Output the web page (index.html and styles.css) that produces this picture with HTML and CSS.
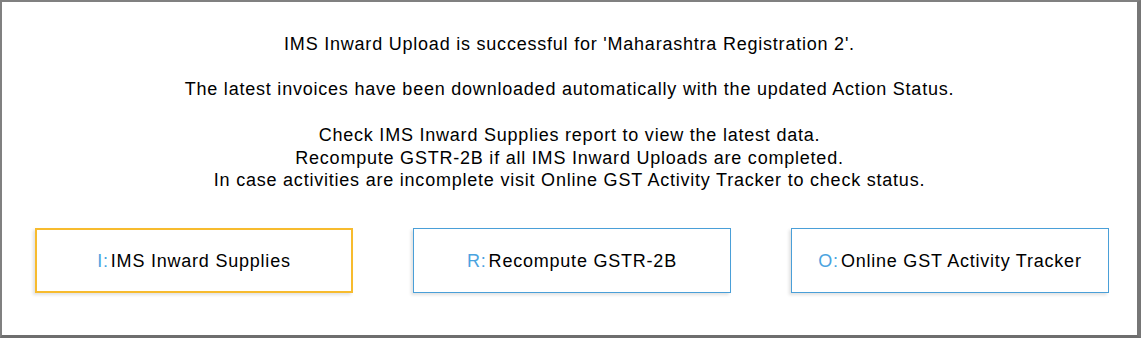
FILE: index.html
```html
<!DOCTYPE html>
<html lang="en">
<head>
    <meta charset="UTF-8">
    <title>IMS Inward Upload</title>
    <link rel="stylesheet" href="styles.css">
</head>
<body>
    <div class="dialog">
        <!-- Message -->
        <div class="message">
            <p class="line-first">IMS Inward Upload is successful for 'Maharashtra Registration 2'.</p>
            <p class="line-second">The latest invoices have been downloaded automatically with the updated Action Status.</p>
            <p class="line-block">
                Check IMS Inward Supplies report to view the latest data.<br>
                Recompute GSTR-2B if all IMS Inward Uploads are completed.<br>
                In case activities are incomplete visit Online GST Activity Tracker to check status.
            </p>
        </div>

        <!-- Actions -->
        <div class="actions">
            <button class="action-button active"><span class="key">I:</span>IMS Inward Supplies</button>
            <button class="action-button"><span class="key">R:</span>Recompute GSTR-2B</button>
            <button class="action-button"><span class="key">O:</span>Online GST Activity Tracker</button>
        </div>
    </div>
</body>
</html>
```

FILE: styles.css
```css
body {
    margin: 0;
    padding: 0;
    background-color: white;
    font-family: "Liberation Sans", Arial, sans-serif;
}
.dialog {
    box-sizing: border-box;
    width: 1141px;
    height: 338px;
    background-color: white;
    border-top: 2px solid #808080;
    border-left: 2px solid #808080;
    border-right: 4px solid #767676;
    border-bottom: 3px solid #6e6e6e;
    display: flex;
    flex-direction: column;
}
.message {
    text-align: center;
    font-size: 18px;
    letter-spacing: 0.78px;
    line-height: 22.5px;
    color: black;
    padding-top: 31px;
}
.message p {
    margin: 0;
}
.line-second {
    margin-top: 22px !important;
}
.line-block {
    margin-top: 24px !important;
}
.actions {
    display: flex;
    gap: 60px;
    padding-left: 33px;
    margin-top: 36px;
}
.action-button {
    box-sizing: border-box;
    width: 318px;
    height: 65px;
    background-color: white;
    border: 1px solid #4a9fd8;
    box-shadow: -2px 2px 3px rgba(0, 0, 0, 0.12);
    font-family: "Liberation Sans", Arial, sans-serif;
    font-size: 18px;
    letter-spacing: 0.78px;
    color: black;
    padding: 3px 0 0 0;
    cursor: pointer;
}
.action-button.active {
    border: 2px solid #f7bb2e;
}
.key {
    color: #4aa3df;
    margin-right: 2px;
}
```
